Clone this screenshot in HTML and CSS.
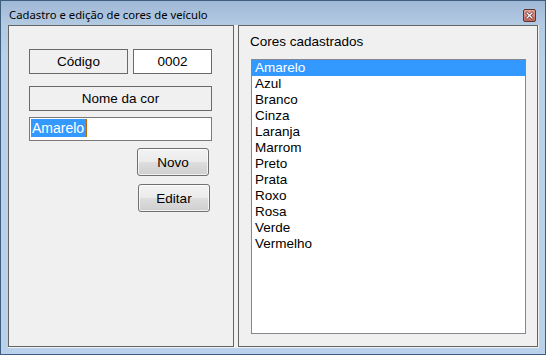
FILE: index.html
```html
<!DOCTYPE html>
<html lang="pt">
<head>
<meta charset="utf-8">
<title>Cadastro e edição de cores de veículo</title>
<link rel="stylesheet" href="styles.css">
</head>
<body>
<div class="window">
  <div class="titlebar">
    <span class="title">Cadastro e edição de cores de veículo</span>
    <span class="close">
      <svg width="13" height="13" viewBox="0 0 13 13">
        <defs>
          <linearGradient id="cg" x1="0" y1="0" x2="0" y2="1">
            <stop offset="0" stop-color="#e9aaa0"/>
            <stop offset="1" stop-color="#c4645a"/>
          </linearGradient>
        </defs>
        <rect x="0.5" y="0.5" width="12" height="12" rx="1.5" fill="url(#cg)" stroke="#5a3434"/>
        <path d="M4 4 L9 9 M9 4 L4 9" stroke="#5a2a2a" stroke-width="2.6" stroke-linecap="square"/>
        <path d="M4 4 L9 9 M9 4 L4 9" stroke="#ffffff" stroke-width="1.3" stroke-linecap="square"/>
      </svg>
    </span>
  </div>
  <div class="client">
    <div class="panel panel-left">
      <div class="row">
        <div class="box box-label codigo">Código</div>
        <div class="box box-value codigo-val">0002</div>
      </div>
      <div class="box box-label nome">Nome da cor</div>
      <div class="field"><span class="sel">Amarelo</span><span class="caret"></span></div>
      <button class="btn novo">Novo</button>
      <button class="btn editar">Editar</button>
    </div>
    <div class="panel panel-right">
      <div class="caption">Cores cadastrados</div>
      <ul class="list">
        <li class="selected">Amarelo</li>
        <li>Azul</li>
        <li>Branco</li>
        <li>Cinza</li>
        <li>Laranja</li>
        <li>Marrom</li>
        <li>Preto</li>
        <li>Prata</li>
        <li>Roxo</li>
        <li>Rosa</li>
        <li>Verde</li>
        <li>Vermelho</li>
      </ul>
    </div>
  </div>
</div>
</body>
</html>
```

FILE: styles.css
```css
* { box-sizing: border-box; }
html, body { margin: 0; padding: 0; }
body {
  width: 546px;
  height: 355px;
  overflow: hidden;
  background: #ffffff;
  font-family: "Liberation Sans", Arial, sans-serif;
}
.window {
  width: 546px;
  height: 355px;
  border: 1px solid #3f5d7c;
  padding: 0 6px 6px 7px;
  background: linear-gradient(to bottom, #9fb8d5 0px, #b3cae3 24px, #b9d1ea 60px, #b9d1ea 100%);
  display: flex;
  flex-direction: column;
}
.titlebar {
  height: 24px;
  display: flex;
  align-items: center;
  justify-content: space-between;
  padding-left: 1px;
  padding-right: 3px;
}
.title {
  font-family: "Noto Sans", "Open Sans", sans-serif;
  font-size: 11.3px;
  color: #000000;
  position: relative;
  top: 1px;
}
.close {
  width: 13px;
  height: 13px;
  display: block;
  position: relative;
  top: 2px;
}
.close svg { display: block; }
.client {
  flex: 1;
  background: #f0f0f0;
  display: flex;
  gap: 4px;
  font-size: 13.5px;
  color: #000000;
}
.panel {
  height: 322px;
  border: 1px solid #646464;
  background: #f0f0f0;
}
.panel-left {
  width: 226px;
  display: flex;
  flex-direction: column;
  align-items: flex-start;
  padding: 23px 0 0 20px;
}
.row {
  display: flex;
  gap: 5px;
}
.box {
  height: 25px;
  border: 1px solid #6a6a6a;
  text-align: center;
  line-height: 23px;
}
.box-label { background: #f0f0f0; }
.box-value { background: #ffffff; }
.codigo { width: 99px; }
.codigo-val { width: 79px; }
.nome { width: 183px; margin-top: 12px; }
.field {
  width: 183px;
  height: 24px;
  margin-top: 6px;
  border: 1px solid #7a7a7a;
  background: #ffffff;
  padding: 1px 0 0 1px;
  display: flex;
  align-items: flex-start;
  font-size: 14px;
}
.sel {
  background: #3399ff;
  color: #ffffff;
  height: 18px;
  line-height: 18px;
  padding: 0 2px 0 1px;
}
.caret {
  width: 1px;
  height: 18px;
  background: #c86400;
}
.btn {
  font-family: inherit;
  font-size: 13.5px;
  color: #000000;
  width: 72px;
  height: 28px;
  padding: 0;
  border: 1px solid #707070;
  border-radius: 3px;
  background: linear-gradient(to bottom, #f3f3f3 0%, #ebebeb 48%, #dddddd 52%, #cfcfcf 100%);
  box-shadow: inset 0 0 0 1px rgba(255,255,255,0.7);
}
.novo { margin: 7px 0 0 108px; }
.editar { margin: 8px 0 0 109px; }
.panel-right {
  width: 300px;
  padding: 8px 0 0 11px;
}
.caption {
  line-height: 15px;
}
.list {
  list-style: none;
  margin: 10px 0 0 1px;
  padding: 0;
  width: 275px;
  height: 275px;
  border: 1px solid #828790;
  background: #ffffff;
}
.list li {
  height: 16px;
  line-height: 16px;
  padding-left: 3px;
}
.list li.selected {
  background: #3399ff;
  color: #ffffff;
}
```
